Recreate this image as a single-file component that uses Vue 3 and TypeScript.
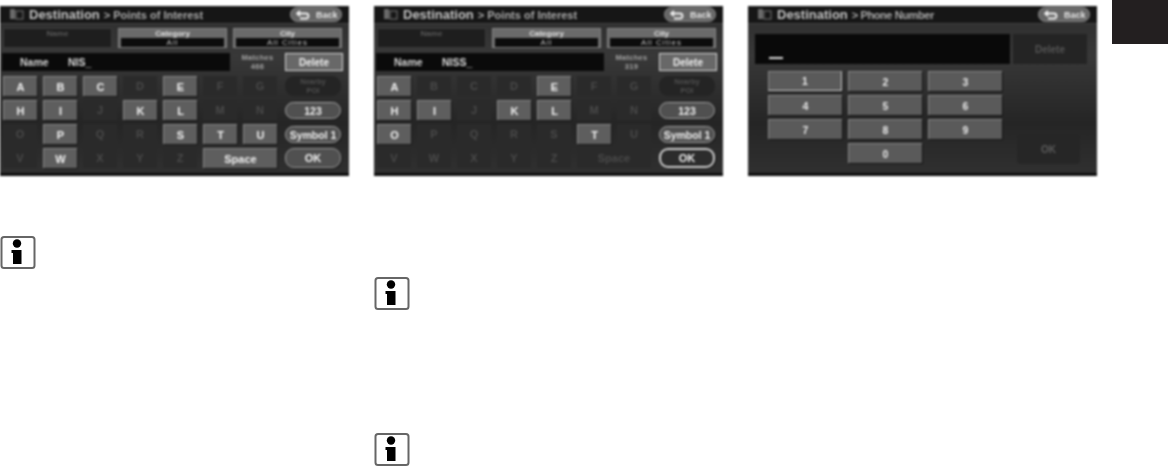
<script setup lang="ts">
interface Cell {
  label: string;
  on: boolean;
  kind?: 'pill' | 'poi' | 'ok';
  span?: number;
  focus?: boolean;
}

const letters = 'ABCDEFG HIJKLMN OPQRSTU VWXYZ'.replace(/ /g, '').split('');

function keyboard(enabled: string, spaceOn: boolean, okFocus: boolean): Cell[] {
  const cell = (label: string): Cell => ({ label, on: enabled.includes(label) });
  return [
    ...letters.slice(0, 7).map(cell),
    { label: 'Nearby POI', on: false, kind: 'poi' },
    ...letters.slice(7, 14).map(cell),
    { label: '123', on: true, kind: 'pill' },
    ...letters.slice(14, 21).map(cell),
    { label: 'Symbol 1', on: true, kind: 'pill' },
    ...letters.slice(21).map(cell),
    { label: 'Space', on: spaceOn, span: 2 },
    { label: 'OK', on: true, kind: 'ok', focus: okFocus }
  ];
}

const poiScreens = [
  { value: 'NIS_', count: '466', cells: keyboard('ABCEHIKLPSTUW', true, false), icons: 1, iconClass: 'info-a' },
  { value: 'NISS_', count: '319', cells: keyboard('AEHIKLOT', false, true), icons: 2, iconClass: 'info-b' }
];

const tabs = [
  { top: 'Name', bottom: '', on: false },
  { top: 'Category', bottom: 'All', on: true },
  { top: 'City', bottom: 'All Cities', on: true }
];

const digits = ['1', '2', '3', '4', '5', '6', '7', '8', '9', '', '0'];
</script>

<template>
  <div class="page">
    <div v-for="screen in poiScreens" :key="screen.value" class="column">
      <section class="screen">
        <header class="title">
          <svg class="nav-icon" width="14" height="13" viewBox="0 0 14 13">
            <rect x="0" y="1" width="5" height="10" fill="#6a6a6a" />
            <rect x="6" y="3" width="7" height="8" fill="none" stroke="#777" />
          </svg>
          <b>Destination</b><span class="crumb">&gt; Points of Interest</span>
          <div class="back">
            <svg width="14" height="10" viewBox="0 0 14 10">
              <path d="M4 1 1 3.5 4 6M1.5 3.5H10a2.5 2.5 0 0 1 0 5H4" fill="none" stroke="#f0f0f0" stroke-width="1.8" />
            </svg>
            Back
          </div>
        </header>
        <div class="tabs">
          <div v-for="tab in tabs" :key="tab.top" class="tab" :class="{ on: tab.on }">
            <span class="tab-top">{{ tab.top }}</span>
            <span class="tab-bottom">{{ tab.bottom }}</span>
          </div>
        </div>
        <div class="entry">
          <div class="field">
            <span class="name">Name</span>
            <span class="value">{{ screen.value }}</span>
          </div>
          <span class="matches">Matches<br />{{ screen.count }}</span>
          <div class="delete focus">Delete</div>
        </div>
        <div class="keys">
          <div
            v-for="cell in screen.cells"
            :key="cell.label"
            class="key"
            :class="[cell.kind, { on: cell.on, focus: cell.focus, wide: cell.span === 2 }]"
          >
            {{ cell.label }}
          </div>
        </div>
      </section>
      <svg v-for="n in screen.icons" :key="n" class="info" :class="screen.iconClass" width="36" height="34" viewBox="0 0 36 34">
        <rect x="1.5" y="1" width="33" height="31" rx="2.5" fill="#fff" stroke="#666" stroke-width="2" />
        <circle cx="17" cy="7.5" r="4.2" fill="#000" />
        <path d="M11.5 14H21.5V28H13V17H11.5z" fill="#000" />
      </svg>
    </div>

    <div class="column">
      <section class="screen">
        <header class="title">
          <svg class="nav-icon" width="14" height="13" viewBox="0 0 14 13">
            <rect x="0" y="1" width="5" height="10" fill="#6a6a6a" />
            <rect x="6" y="3" width="7" height="8" fill="none" stroke="#777" />
          </svg>
          <b>Destination</b><span class="crumb tight">&gt; Phone Number</span>
          <div class="back">
            <svg width="14" height="10" viewBox="0 0 14 10">
              <path d="M4 1 1 3.5 4 6M1.5 3.5H10a2.5 2.5 0 0 1 0 5H4" fill="none" stroke="#f0f0f0" stroke-width="1.8" />
            </svg>
            Back
          </div>
        </header>
        <div class="phone-entry">
          <div class="phone-field"><span class="cursor"></span></div>
          <div class="phone-delete">Delete</div>
        </div>
        <div class="phone-body">
          <div class="pad">
            <template v-for="(d, i) in digits" :key="i">
              <div v-if="d" class="digit" :class="{ focus: d === '1' }">{{ d }}</div>
              <div v-else></div>
            </template>
          </div>
          <div class="phone-ok">OK</div>
        </div>
      </section>
    </div>

    <div class="tab-mark"></div>
  </div>
</template>

<style scoped>
.page {
  display: flex;
  align-items: flex-start;
  width: 1168px;
  height: 468px;
  overflow: hidden;
  background: #fff;
  font-family: "Liberation Sans", Arial, sans-serif;
}

.column {
  display: flex;
  flex-direction: column;
  width: 349px;
  margin-right: 25px;
  padding-top: 6px;
}

.column:nth-child(3) {
  margin-right: 15px;
}

.screen {
  width: 349px;
  height: 170px;
  box-sizing: border-box;
  overflow: hidden;
  background: linear-gradient(180deg, #2c2c2c 0%, #383838 30%, #252525 70%, #303030 100%);
  border-bottom: 3px solid #0c0c0c;
  filter: blur(0.8px);
  color: #d8d8d8;
}

.title {
  display: flex;
  align-items: center;
  height: 17px;
  padding: 0 7px 0 10px;
  background: #161616;
  box-shadow: 0 1px 0 #444;
  font-size: 11px;
}

.nav-icon {
  margin-right: 5px;
}

.title b {
  font-size: 13px;
  color: #c4c4c4;
  margin-right: 4px;
}

.crumb {
  font-size: 11px;
  font-weight: bold;
  color: #aaa;
}

.crumb.tight {
  letter-spacing: -0.4px;
}

.back {
  display: flex;
  align-items: center;
  gap: 6px;
  width: 52px;
  height: 15px;
  box-sizing: border-box;
  margin-left: auto;
  padding-left: 5px;
  border-radius: 8px;
  background: #666;
  border: 1px solid #8c8c8c;
  font-size: 9px;
  font-weight: bold;
  color: #e6e6e6;
}

.tabs {
  display: flex;
  gap: 6px;
  padding: 5px 7px 0 3px;
}

.tab {
  display: flex;
  flex-direction: column;
  align-items: center;
  flex: 1;
  height: 20px;
  box-sizing: border-box;
  background: #1e1e1e;
  border: 1px solid #3a3a3a;
  font-size: 8px;
  color: #5a5a5a;
}

.tab.on {
  background: #6a6a6a;
  border-color: #858585;
  color: #e0e0e0;
}

.tab-top {
  height: 9px;
  line-height: 9px;
  font-weight: bold;
}

.tab-bottom {
  align-self: stretch;
  flex: 1;
  margin: 0 2px 1px;
  line-height: 9px;
  text-align: center;
  letter-spacing: 1px;
}

.tab.on .tab-bottom {
  background: #0c0c0c;
  color: #c4c4c4;
}

.entry {
  display: flex;
  align-items: stretch;
  height: 18px;
  margin-top: 5px;
  padding: 0 6px 0 2px;
}

.field {
  display: flex;
  align-items: center;
  width: 228px;
  background: #0a0a0a;
  font-weight: bold;
}

.name {
  width: 66px;
  padding-left: 18px;
  box-sizing: border-box;
  font-size: 10.5px;
  color: #d4d4d4;
}

.value {
  font-size: 10.5px;
  color: #dcdcdc;
}

.matches {
  display: block;
  width: 55px;
  font-size: 7.5px;
  font-weight: bold;
  line-height: 9px;
  text-align: center;
  letter-spacing: 0.3px;
  color: #a4a4a4;
}

.delete {
  width: 58px;
  display: flex;
  align-items: center;
  justify-content: center;
  background: #686868;
  font-size: 10px;
  font-weight: bold;
  color: #f0f0f0;
  box-sizing: border-box;
}

.focus {
  border: 1px solid #d8d8d8;
}

.keys {
  display: grid;
  grid-template-columns: repeat(7, 34px) 58px;
  grid-auto-rows: 20px;
  column-gap: 6px;
  row-gap: 4px;
  margin-top: 5px;
  padding-left: 3px;
}

.key {
  display: flex;
  align-items: center;
  justify-content: center;
  box-sizing: border-box;
  background: #2a2a2a;
  font-size: 11px;
  font-weight: bold;
  color: #4a4a4a;
}

.key.on {
  background: #5e5e5e;
  border-top: 1px solid #878787;
  border-left: 1px solid #878787;
  box-shadow: 1px 1px 0 #171717;
  color: #f2f2f2;
}

.key.wide {
  grid-column: span 2;
}

.key.poi,
.key.pill,
.key.ok {
  margin-left: 2px;
  border-radius: 9px;
}

.key.poi {
  padding: 0 10px;
  text-align: center;
  font-size: 7.5px;
  line-height: 9px;
  background: #242424;
  color: #505050;
}

.key.pill {
  margin-top: 2px;
  margin-bottom: 1px;
  border: 1px solid #a4a4a4;
  background: #505050;
  font-size: 10.5px;
}

.key.ok {
  border: 1px solid #9a9a9a;
  background: #505050;
  font-size: 11px;
  color: #f4f4f4;
}

.key.ok.focus {
  border: 2px solid #d0d0d0;
  background: #2c2c2c;
}

.info {
  display: block;
  filter: blur(0.5px);
}

.info-a {
  margin-top: 60px;
}

.info-b {
  margin-top: 101px;
}

.info-b + .info-b {
  margin-top: 122px;
}

.phone-entry {
  display: flex;
  gap: 3px;
  height: 30px;
  margin-top: 11px;
  padding: 0 10px 0 7px;
}

.phone-field {
  flex: 1;
  position: relative;
  background: #090909;
}

.cursor {
  position: absolute;
  left: 14px;
  bottom: 5px;
  width: 14px;
  height: 2px;
  background: #dedede;
}

.phone-delete {
  width: 74px;
  display: flex;
  align-items: center;
  justify-content: center;
  background: #242424;
  font-size: 10px;
  font-weight: bold;
  color: #555;
}

.phone-body {
  position: relative;
  padding: 7px 0 0 20px;
}

.pad {
  display: grid;
  grid-template-columns: repeat(3, 74px);
  grid-auto-rows: 20px;
  column-gap: 6px;
  row-gap: 4px;
}

.digit {
  display: flex;
  align-items: center;
  justify-content: center;
  box-sizing: border-box;
  background: #5a5a5a;
  border-top: 1px solid #878787;
  border-left: 1px solid #878787;
  box-shadow: 1px 1px 0 #121212;
  font-size: 10.5px;
  font-weight: bold;
  color: #e8e8e8;
}

.phone-ok {
  position: absolute;
  left: 269px;
  top: 70px;
  width: 63px;
  height: 30px;
  display: flex;
  align-items: center;
  justify-content: center;
  border-radius: 4px;
  background: #262626;
  font-size: 10px;
  font-weight: bold;
  color: #5c5c5c;
}

.tab-mark {
  width: 56px;
  height: 44px;
  background: #231f20;
}
</style>

<style>
body {
  background: #fff;
}
</style>
